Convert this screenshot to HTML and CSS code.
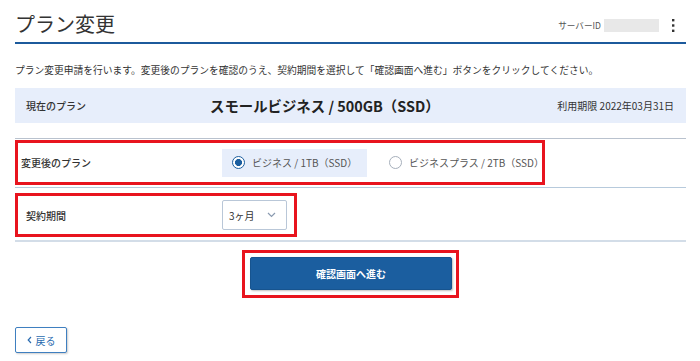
FILE: index.html
```html
<html>
<head>
<meta charset="utf-8">
<title>プラン変更</title>
<link rel="stylesheet" href="styles.css">
</head>
<body>
<div class="page">
	<div class="page-head">
		<h1>プラン変更</h1>
		<div class="server">
			<span class="server-label">サーバーID</span>
			<span class="server-id"></span>
			<svg class="kebab" width="4" height="15" viewBox="0 0 4 15"><rect x="1" y="1" width="2.4" height="2.4" fill="#333"/><rect x="1" y="6.3" width="2.4" height="2.4" fill="#333"/><rect x="1" y="11.6" width="2.4" height="2.4" fill="#333"/></svg>
		</div>
	</div>

	<p class="lead">プラン変更申請を行います。変更後のプランを確認のうえ、契約期間を選択して「確認画面へ進む」ボタンをクリックしてください。</p>

	<div class="current">
		<span class="current-label">現在のプラン</span>
		<span class="current-name">スモールビジネス / 500GB（SSD）</span>
		<span class="current-limit">利用期限 2022年03月31日</span>
	</div>

	<div class="form">
		<div class="row row-plan">
			<div class="mark mark-plan">
				<span class="label">変更後のプラン</span>
				<div class="choices">
					<div class="choice is-on"><span class="radio"></span>ビジネス / 1TB（SSD）</div>
					<div class="choice"><span class="radio"></span>ビジネスプラス / 2TB（SSD）</div>
				</div>
			</div>
		</div>
		<div class="row row-term">
			<div class="mark mark-term">
				<span class="label">契約期間</span>
				<div class="select">3ヶ月<svg width="9" height="6" viewBox="0 0 9 6"><path d="M1 1l3.5 3.5L8 1" fill="none" stroke="#8a9ab0" stroke-width="1.2"/></svg></div>
			</div>
		</div>
	</div>

	<div class="submit">
		<div class="mark mark-btn"><button class="btn-next">確認画面へ進む</button></div>
	</div>

	<button class="btn-back"><svg width="5" height="8" viewBox="0 0 5 8"><path d="M4 1L1.2 4 4 7" fill="none" stroke="#2a6cb0" stroke-width="1.2"/></svg>戻る</button>
</div>
</body>
</html>
```

FILE: styles.css
```css
html, body {
	margin: 0px;
	padding: 0px;
	background-color: #ffffff;
	color: #333333;
	font-family: "Noto Sans CJK JP", "Liberation Sans", sans-serif;
}
.page {
	padding: 0px 14px 0px 15px;
}
.page-head {
	height: 42px;
	display: flex;
	align-items: center;
	justify-content: space-between;
	border-bottom: 2px solid #1c5a9c;
}
h1 {
	margin: 0px;
	font-size: 20px;
	font-weight: normal;
	color: #333333;
	line-height: 1;
	padding-top: 6px;
}
.server {
	display: flex;
	align-items: center;
	padding-top: 8px;
	padding-right: 11px;
}
.server-label {
	font-size: 8.6px;
	color: #555555;
	margin-right: 3px;
}
.server-id {
	width: 55px;
	height: 13px;
	background-color: #e8e8e8;
}
.kebab {
	margin-left: 12px;
}
.lead {
	margin: 21px 0px 0px 0px;
	font-size: 9.75px;
	line-height: 10px;
	white-space: nowrap;
}
.current {
	margin-top: 13px;
	height: 35px;
	background-color: #e7eefb;
	display: grid;
	grid-template-columns: 184px 1fr auto;
	align-items: center;
	padding: 0px 12px 0px 11px;
}
.current-label {
	font-size: 10px;
	font-weight: 500;
}
.current-name {
	font-size: 14.4px;
	font-weight: bold;
	color: #222222;
}
.current-limit {
	font-size: 10px;
}
.form {
	margin-top: 15px;
	border-top: 1px solid #b9c2ce;
}
.row {
	border-bottom: 1px solid #b7cadc;
}
.row-plan {
	padding: 1px 0px 2px 0px;
}
.row-term {
	padding: 5px 0px 3px 0px;
	border-bottom: 2px solid #d3dde8;
}
.mark {
	border: 3px solid #e8141e;
	box-sizing: border-box;
}
.label {
	font-size: 10px;
	font-weight: 500;
}
.mark-plan {
	width: 530px;
	height: 45px;
	display: grid;
	grid-template-columns: 201px 1fr;
	align-items: center;
	padding-left: 3px;
}
.choices {
	display: flex;
	align-items: center;
	gap: 12px;
}
.choice {
	height: 28px;
	display: flex;
	align-items: center;
	padding: 0px 10px;
	font-size: 10px;
	color: #555555;
	white-space: nowrap;
}
.choice.is-on {
	background-color: #e7eefb;
	width: 145px;
	box-sizing: border-box;
}
.radio {
	width: 13px;
	height: 13px;
	flex-shrink: 0;
	box-sizing: border-box;
	border: 1.5px solid #a6afbb;
	border-radius: 50%;
	margin-right: 7px;
	background-color: #ffffff;
}
.is-on .radio {
	border: 1.5px solid #1b5e9f;
	background: radial-gradient(circle, #1b5e9f 0px, #1b5e9f 3.2px, #ffffff 3.8px);
}
.mark-term {
	width: 282px;
	height: 44px;
	display: grid;
	grid-template-columns: 196px 1fr;
	align-items: center;
	padding-left: 8px;
}
.select {
	width: 65px;
	height: 30px;
	box-sizing: border-box;
	border: 1px solid #b9c7d8;
	border-radius: 2px;
	display: flex;
	align-items: center;
	justify-content: space-between;
	padding: 0px 10px 0px 6px;
	font-size: 10px;
}
.submit {
	margin-top: 8px;
	display: flex;
	justify-content: center;
}
.mark-btn {
	width: 217px;
	height: 48px;
	padding: 4px 4px 5px 5px;
}
.btn-next {
	width: 202px;
	height: 33px;
	border: 1px solid #17548f;
	border-radius: 2px;
	background-color: #1b5e9f;
	color: #ffffff;
	font-family: "Noto Sans CJK JP", sans-serif;
	font-size: 10px;
	font-weight: bold;
	box-shadow: 1px 1px 2px rgba(0,0,0,0.25);
}
.btn-back {
	margin-top: 29px;
	width: 52px;
	height: 26px;
	border: 1px solid #3f7fc0;
	border-radius: 2px;
	background-color: #ffffff;
	color: #2a6cb0;
	font-family: "Noto Sans CJK JP", sans-serif;
	font-size: 10px;
	padding: 0px;
	display: flex;
	align-items: center;
	justify-content: center;
	gap: 4px;
	box-shadow: 1px 1px 2px rgba(0,0,0,0.2);
}
```
